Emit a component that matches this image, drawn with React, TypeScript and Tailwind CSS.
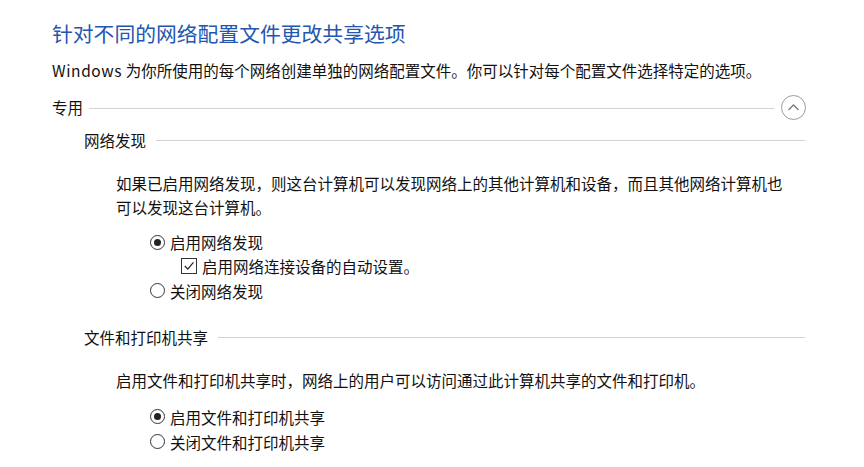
import React from "react";

const font = { fontFamily: '"Noto Sans CJK SC", "Noto Sans", sans-serif' };

function Radio({ checked }: { checked?: boolean }) {
  return (
    <span className="w-[15px] h-[15px] rounded-full border border-[#333] flex items-center justify-center shrink-0">
      {checked && <span className="w-[7px] h-[7px] rounded-full bg-[#222]" />}
    </span>
  );
}

function Checkbox() {
  return (
    <span className="w-[16px] h-[16px] border border-[#333] flex items-center justify-center shrink-0">
      <svg width="12" height="12" viewBox="0 0 12 12" fill="none">
        <path d="M1.8 6 L4.8 9.2 L10.4 2.4" stroke="#222" strokeWidth="1.2" />
      </svg>
    </span>
  );
}

function SubHeading({ title }: { title: string }) {
  return (
    <div className="flex items-center gap-[10px] h-[24px] w-[721px]">
      <span>{title}</span>
      <div className="flex-1 h-px bg-[#d2d2d2]" />
    </div>
  );
}

export default function App() {
  return (
    <div className="w-[864px] h-[467px] bg-white text-[#111] text-[15.5px] leading-[24px] pl-[52px] pt-[19px] overflow-hidden" style={font}>
      <h1 className="text-[20.8px] leading-[28px] text-[#2356b0]">针对不同的网络配置文件更改共享选项</h1>
      <p className="mt-[11px]">
        <span className="tracking-[0.6px]">Windows</span> 为你所使用的每个网络创建单独的网络配置文件。你可以针对每个配置文件选择特定的选项。
      </p>

      <div className="mt-[12px] flex items-center h-[26px] w-[754px]">
        <span>专用</span>
        <div className="flex-1 h-px bg-[#d2d2d2] ml-[6px] mr-[7px] mt-[2px]" />
        <span className="w-[25px] h-[25px] rounded-full border border-[#9a9a9a] flex items-center justify-center">
          <svg width="13" height="9" viewBox="0 0 13 9" fill="none">
            <path d="M1.5 7 L6.5 2 L11.5 7" stroke="#7a7a7a" strokeWidth="1.3" />
          </svg>
        </span>
      </div>

      <div className="pl-[32px]">
        <div className="mt-[8px]">
          <SubHeading title="网络发现" />
        </div>
        <div className="pl-[32px]">
          <p className="mt-[19px]">
            如果已启用网络发现，则这台计算机可以发现网络上的其他计算机和设备，而且其他网络计算机也
            <br />
            可以发现这台计算机。
          </p>
          <div className="pl-[34px] mt-[11px]">
            <div className="flex items-center gap-[5px] h-[24px]">
              <Radio checked />
              <span>启用网络发现</span>
            </div>
            <div className="flex items-center gap-[5px] h-[24px] pl-[31px]">
              <Checkbox />
              <span>启用网络连接设备的自动设置。</span>
            </div>
            <div className="flex items-center gap-[5px] h-[25px]">
              <Radio />
              <span>关闭网络发现</span>
            </div>
          </div>
        </div>

        <div className="mt-[22px]">
          <SubHeading title="文件和打印机共享" />
        </div>
        <div className="pl-[32px]">
          <p className="mt-[19px]">启用文件和打印机共享时，网络上的用户可以访问通过此计算机共享的文件和打印机。</p>
          <div className="pl-[34px] mt-[12px]">
            <div className="flex items-center gap-[5px] h-[25px]">
              <Radio checked />
              <span>启用文件和打印机共享</span>
            </div>
            <div className="flex items-center gap-[5px] h-[25px]">
              <Radio />
              <span>关闭文件和打印机共享</span>
            </div>
          </div>
        </div>
      </div>
    </div>
  );
}
